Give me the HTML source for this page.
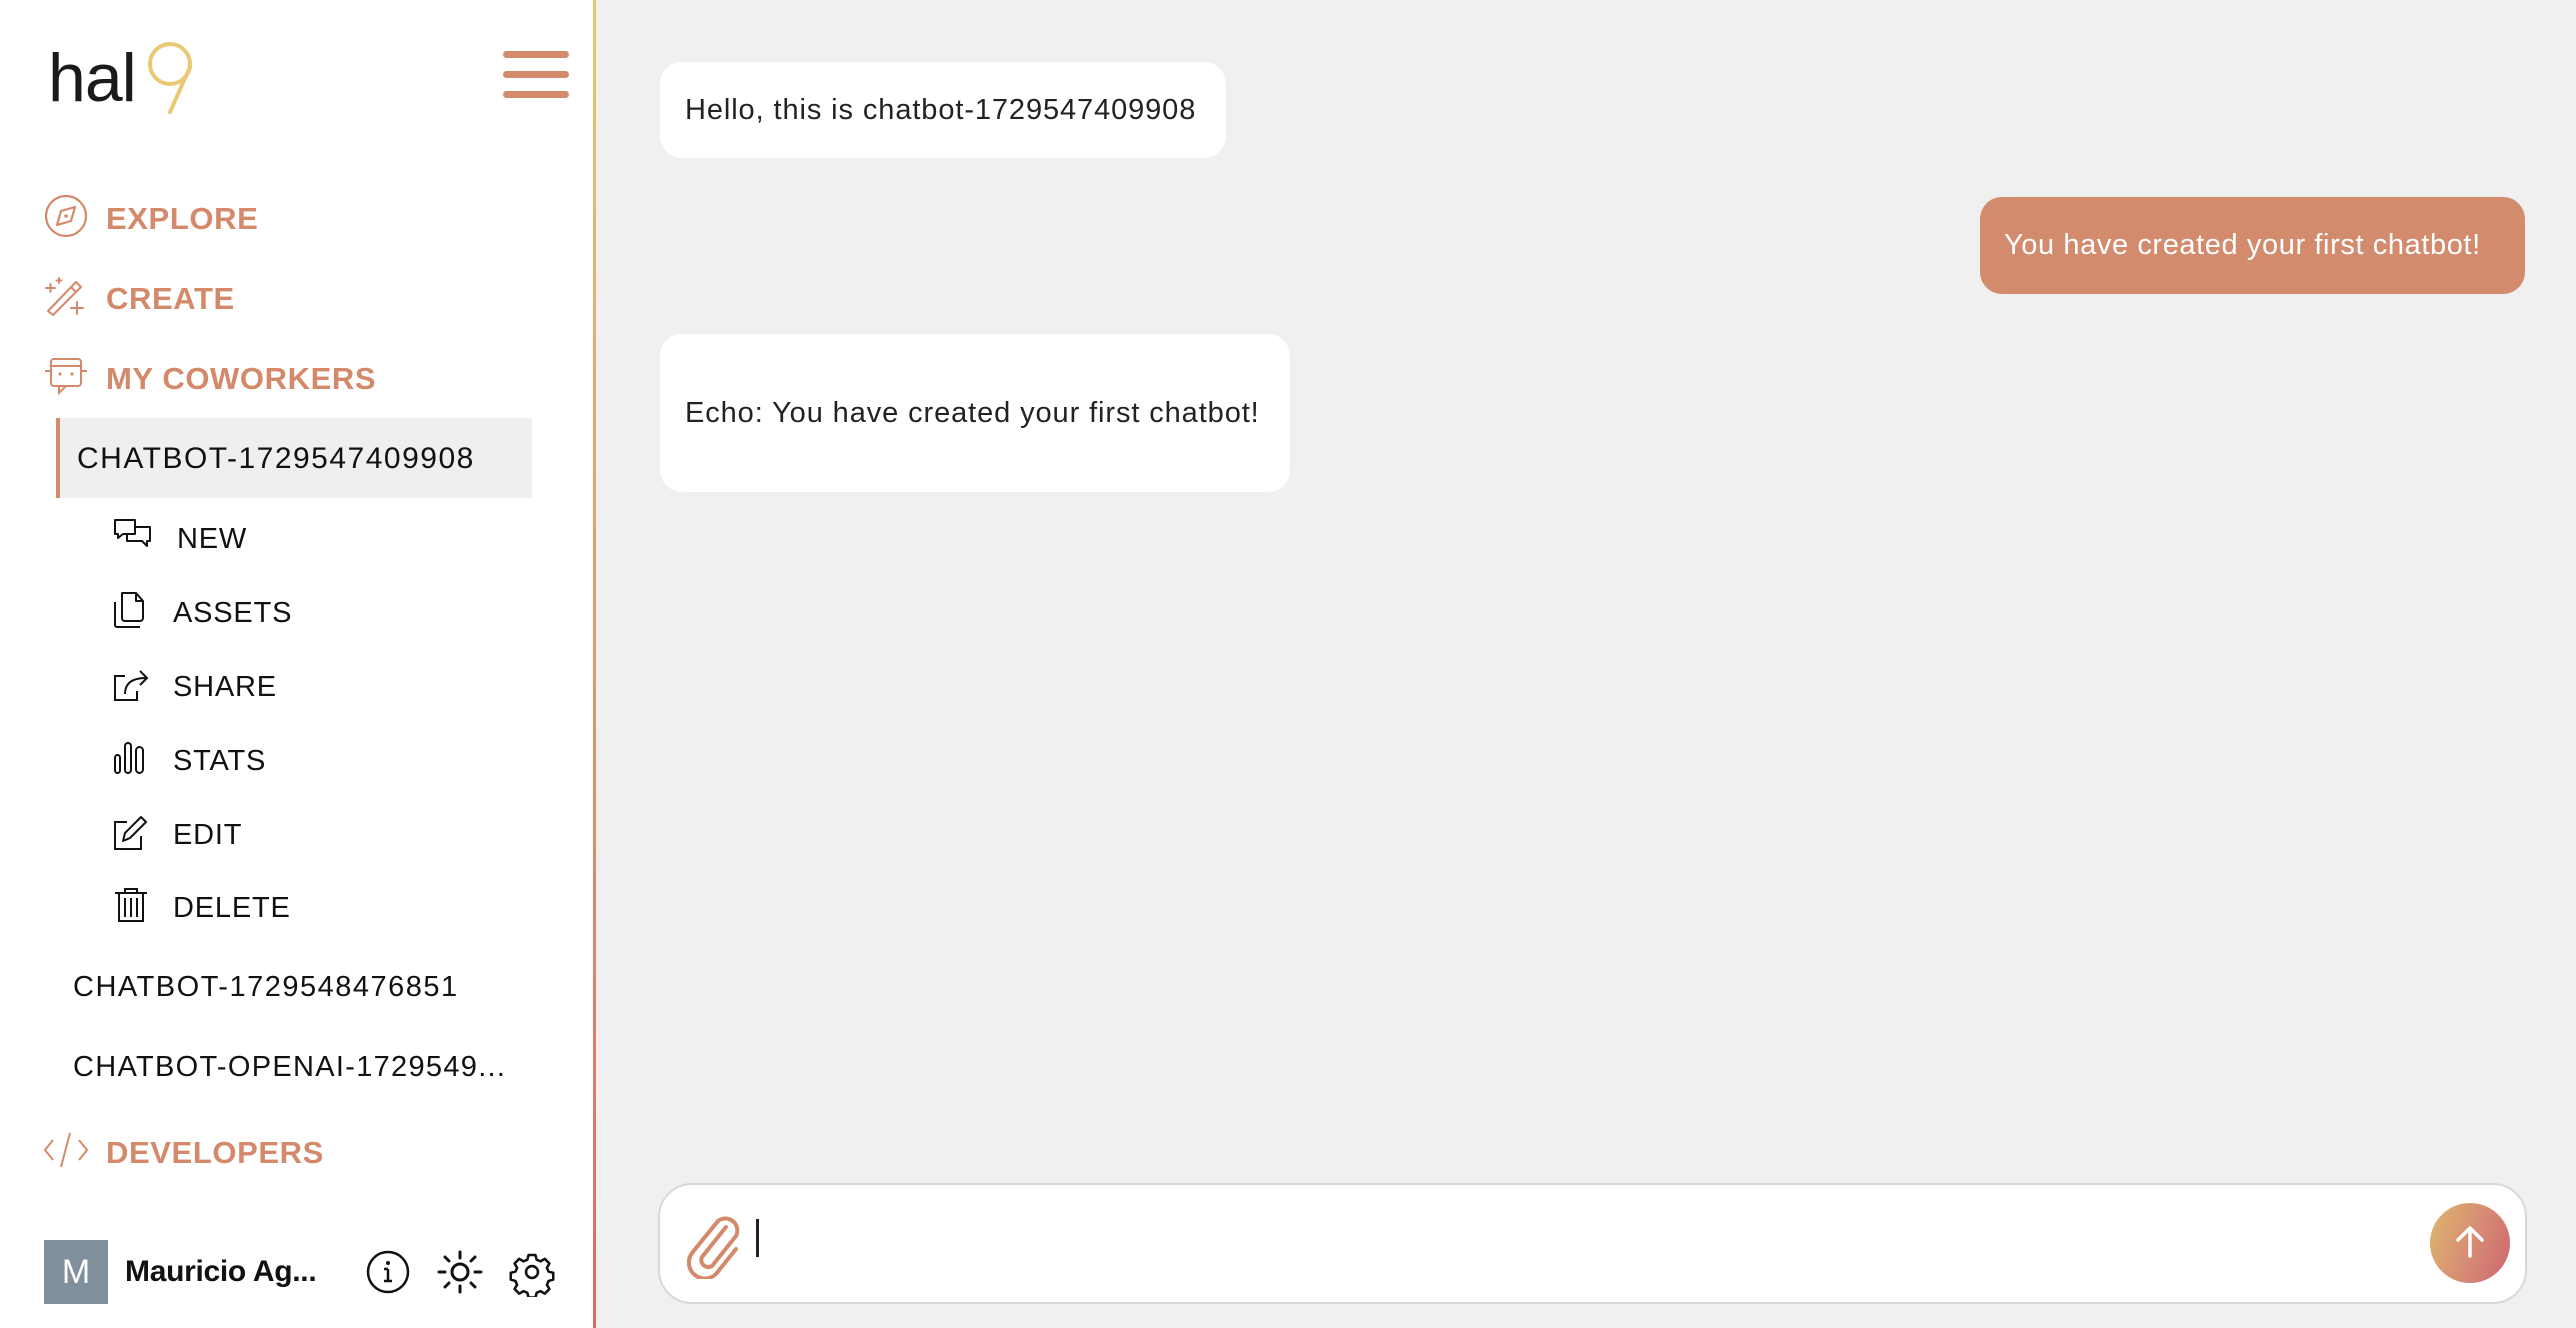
<!DOCTYPE html>
<html><head><meta charset="utf-8"><style>
*{margin:0;padding:0;box-sizing:border-box}
body{width:2576px;height:1328px;overflow:hidden;background:#f0f0f0;font-family:"Liberation Sans",sans-serif;position:relative}
.sb{position:absolute;left:0;top:0;width:593px;height:1328px;background:#fff}
.bl{position:absolute;left:593px;top:0;width:3px;height:1328px;background:linear-gradient(#e6c670,#d96a6a)}
.abs{position:absolute;white-space:nowrap}
.nav{position:absolute;left:106px;color:#d4896a;font-weight:bold;font-size:31px;letter-spacing:0.6px;line-height:40px;white-space:nowrap}
.it{position:absolute;color:#111;font-size:29px;line-height:40px;white-space:nowrap;letter-spacing:0.8px}
.ic{position:absolute}
.bub{position:absolute;background:#fff;border-radius:22px;font-size:29px;color:#222;padding-left:25px;display:flex;align-items:center;white-space:nowrap;letter-spacing:0.9px}
</style></head><body>
<div class="sb">
  <div class="abs" style="left:48px;top:40px;font-size:68px;color:#1a1a1a;letter-spacing:-1px;line-height:76px">hal</div>
  <svg class="ic" style="left:144px;top:40px" width="54" height="76" viewBox="0 0 54 76"><circle cx="26" cy="24" r="20" fill="none" stroke="#e8c873" stroke-width="4"/><path d="M46 27 L26 72" stroke="#e8c873" stroke-width="4" stroke-linecap="round"/></svg>
  <div class="abs" style="left:503px;top:51px;width:66px;height:7px;border-radius:4px;background:#d38b6d"></div>
  <div class="abs" style="left:503px;top:71px;width:66px;height:7px;border-radius:4px;background:#d38b6d"></div>
  <div class="abs" style="left:503px;top:91px;width:66px;height:7px;border-radius:4px;background:#d38b6d"></div>

  <svg class="ic" style="left:44px;top:194px" width="44" height="44" viewBox="0 0 44 44"><circle cx="22" cy="22" r="20" fill="none" stroke="#d4896a" stroke-width="2.2"/><path d="M13 31 L17 17 L31 13 L27 27 Z" fill="none" stroke="#d4896a" stroke-width="2.2" stroke-linejoin="round"/><circle cx="22" cy="22" r="1.8" fill="#d4896a"/></svg>
  <div class="nav" style="top:199px">EXPLORE</div>
  <svg class="ic" style="left:44px;top:276px" width="42" height="40" viewBox="0 0 42 40"><path d="M4 35 L32 6 L37 11 L9 39 Z M27 11 L32 16" fill="none" stroke="#d4896a" stroke-width="2" stroke-linejoin="round"/><path d="M2 12h9M6.5 8v8M15 2v5M12.5 4.5h5M33 26v12M27 32h12" stroke="#d4896a" stroke-width="2" stroke-linecap="round"/></svg>
  <div class="nav" style="top:279px">CREATE</div>
  <svg class="ic" style="left:44px;top:357px" width="44" height="38" viewBox="0 0 44 38"><rect x="7" y="2" width="30" height="27" rx="3" fill="none" stroke="#d4896a" stroke-width="2"/><path d="M7 9h30M1 14h6M37 14h6M15 29l0 7 7-7" fill="none" stroke="#d4896a" stroke-width="2"/><circle cx="16" cy="17" r="1.6" fill="#d4896a"/><circle cx="28" cy="17" r="1.6" fill="#d4896a"/></svg>
  <div class="nav" style="top:359px">MY COWORKERS</div>

  <div class="abs" style="left:56px;top:418px;width:476px;height:80px;background:#efefef;border-left:4px solid #d38b6d"></div>
  <div class="it" style="left:77px;top:439px;font-size:30px;letter-spacing:1.5px">CHATBOT-1729547409908</div>

  <svg class="ic" style="left:113px;top:518px" width="40" height="34" viewBox="0 0 40 34"><path d="M2 2h20v14H10l-5 4v-4H2Z" fill="none" stroke="#111" stroke-width="2" stroke-linejoin="round"/><path d="M22 9h15v14h-3v5l-5-5h-15v-7" fill="none" stroke="#111" stroke-width="2" stroke-linejoin="round"/></svg>
  <div class="it" style="left:177px;top:519px">NEW</div>
  <svg class="ic" style="left:113px;top:591px" width="34" height="38" viewBox="0 0 34 38"><path d="M9 2h14l7 8v17a3 3 0 0 1-3 3H12a3 3 0 0 1-3-3Z M23 2v8h7" fill="none" stroke="#111" stroke-width="2" stroke-linejoin="round"/><path d="M2 11v23a2 2 0 0 0 2 2h23" fill="none" stroke="#111" stroke-width="2"/></svg>
  <div class="it" style="left:173px;top:593px">ASSETS</div>
  <svg class="ic" style="left:113px;top:667px" width="36" height="36" viewBox="0 0 36 36"><path d="M12 9H2v24h22v-9" fill="none" stroke="#111" stroke-width="2"/><path d="M12 27c0-10 6-16 21-16M27 4l7 7-7 7" fill="none" stroke="#111" stroke-width="2" stroke-linejoin="round"/></svg>
  <div class="it" style="left:173px;top:667px">SHARE</div>
  <svg class="ic" style="left:113px;top:741px" width="34" height="34" viewBox="0 0 34 34"><rect x="2" y="14" width="5" height="18" rx="2.5" fill="none" stroke="#111" stroke-width="2"/><rect x="12" y="2" width="6" height="30" rx="3" fill="none" stroke="#111" stroke-width="2"/><rect x="23" y="6" width="7" height="26" rx="3.5" fill="none" stroke="#111" stroke-width="2"/></svg>
  <div class="it" style="left:173px;top:741px">STATS</div>
  <svg class="ic" style="left:113px;top:814px" width="36" height="38" viewBox="0 0 36 38"><path d="M14 8H2v27h26V22" fill="none" stroke="#111" stroke-width="2"/><path d="M10 27l2-8L28 3l5 5-16 16Z" fill="none" stroke="#111" stroke-width="2" stroke-linejoin="round"/></svg>
  <div class="it" style="left:173px;top:815px">EDIT</div>
  <svg class="ic" style="left:114px;top:887px" width="34" height="36" viewBox="0 0 34 36"><path d="M1 6h32M11 6V2h12v4M5 6v28h24V6M11 11v19M17 11v19M23 11v19" fill="none" stroke="#111" stroke-width="2"/></svg>
  <div class="it" style="left:173px;top:888px">DELETE</div>

  <div class="it" style="left:73px;top:967px;letter-spacing:1.5px">CHATBOT-1729548476851</div>
  <div class="it" style="left:73px;top:1047px;letter-spacing:1.3px">CHATBOT-OPENAI-1729549...</div>

  <svg class="ic" style="left:43px;top:1131px" width="46" height="38" viewBox="0 0 46 38"><path d="M10 9L2 19l8 10M36 9l8 10-8 10M27 2L18 36" fill="none" stroke="#d4896a" stroke-width="2"/></svg>
  <div class="nav" style="top:1133px">DEVELOPERS</div>

  <div class="abs" style="left:44px;top:1240px;width:64px;height:64px;background:#7f8f9b;color:#fff;font-size:34px;text-align:center;line-height:64px">M</div>
  <div class="abs" style="left:125px;top:1252px;font-size:30px;font-weight:bold;color:#111;line-height:40px;letter-spacing:-0.3px">Mauricio Ag...</div>
  <svg class="ic" style="left:364px;top:1249px" width="48" height="48" viewBox="0 0 48 48"><circle cx="24" cy="23" r="20" fill="none" stroke="#111" stroke-width="2.5"/><path d="M24 20v12M20 32h8M20 20h4" stroke="#111" stroke-width="2.5"/><circle cx="24" cy="14" r="2" fill="#111"/></svg>
  <svg class="ic" style="left:436px;top:1249px" width="48" height="48" viewBox="0 0 48 48"><circle cx="24" cy="23" r="8" fill="none" stroke="#111" stroke-width="3"/><path d="M24 3v6M24 37v6M3 23h6M39 23h6M9 8l4 4M35 34l4 4M9 38l4-4M35 12l4-4" stroke="#111" stroke-width="3" stroke-linecap="round"/></svg>
  <svg class="ic" style="left:508px;top:1249px" width="48" height="48" viewBox="0 0 48 48"><g transform="translate(24 23) scale(0.85)"><path d="M-4 -20h8l1.5 5.5 4.5 2 5-3 5.5 5.5-3 5 2 4.5 5.5 1.5v8l-5.5 1.5-2 4.5 3 5-5.5 5.5-5-3-4.5 2-1.5 5.5h-8l-1.5-5.5-4.5-2-5 3-5.5-5.5 3-5-2-4.5-5.5-1.5v-8l5.5-1.5 2-4.5-3-5 5.5-5.5 5 3 4.5-2Z" fill="none" stroke="#111" stroke-width="3" stroke-linejoin="round"/><circle r="7" fill="none" stroke="#111" stroke-width="3"/></g></svg>
</div>
<div class="bl"></div>

<div class="bub" style="left:660px;top:62px;width:566px;height:96px">Hello, this is chatbot-1729547409908</div>
<div class="bub" style="left:1980px;top:197px;width:545px;height:97px;background:#d38b6d;color:#fff;padding-left:24px;letter-spacing:0.6px">You have created your first chatbot!</div>
<div class="bub" style="left:660px;top:334px;width:630px;height:158px">Echo: You have created your first chatbot!</div>

<div class="abs" style="left:658px;top:1183px;width:1869px;height:121px;background:#fff;border:2px solid #d8d8d8;border-radius:34px"></div>
<svg class="ic" style="left:684px;top:1213px" width="60" height="66" viewBox="0 0 60 66"><path d="M42 14L18 44a7 7 0 0 0 10 9l24-30a12 12 0 0 0-18-15L8 40a16 16 0 0 0 24 21l20-25" fill="none" stroke="#d4896a" stroke-width="4" stroke-linecap="round"/></svg>
<div class="abs" style="left:756px;top:1219px;width:3px;height:38px;background:#222"></div>
<div class="abs" style="left:2430px;top:1203px;width:80px;height:80px;border-radius:50%;background:linear-gradient(110deg,#ddb86e,#d68a74 55%,#cf6570)"></div>
<svg class="ic" style="left:2450px;top:1223px" width="40" height="40" viewBox="0 0 40 40"><path d="M20 33V6M8 17L20 5l12 12" fill="none" stroke="#fff" stroke-width="3.5" stroke-linecap="round" stroke-linejoin="round"/></svg>
</body></html>
